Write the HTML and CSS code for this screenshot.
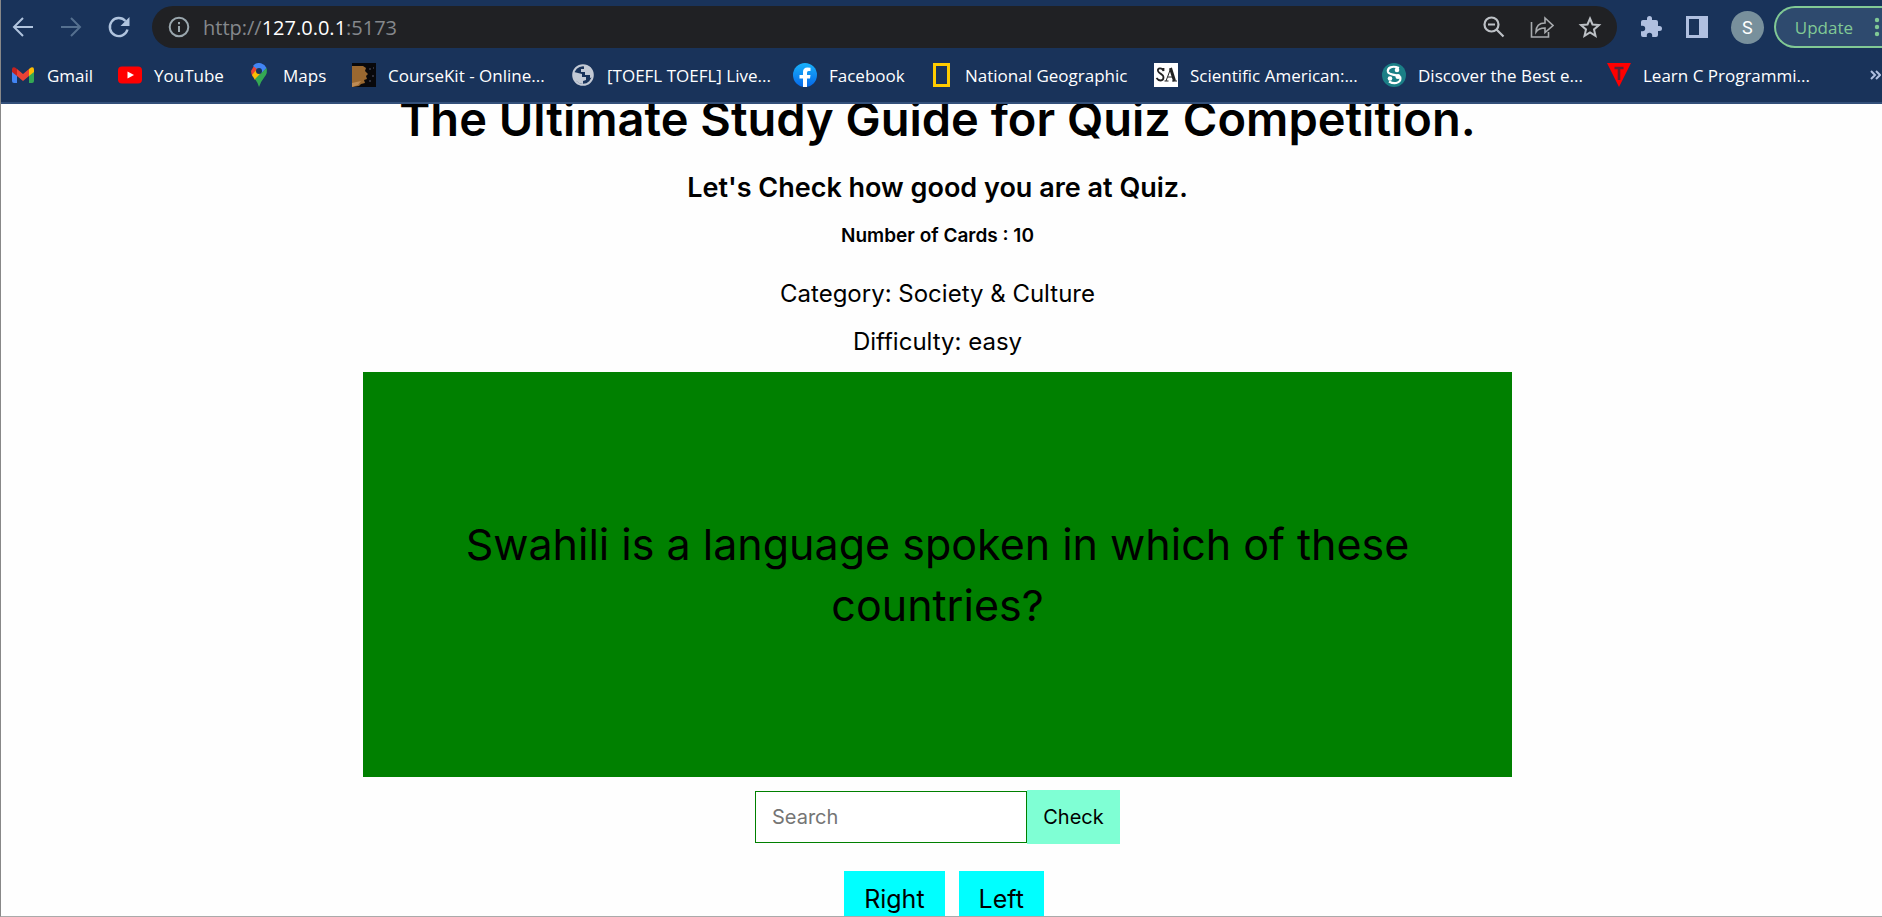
FILE: index.html
```html
<!DOCTYPE html>
<html lang="en">
<head>
<meta charset="utf-8">
<title>Quiz Cards</title>
<link rel="stylesheet" href="styles.css">
</head>
<body>
<header class="browser">
  <div class="toolbar">
    <div class="nav">
      <button class="icon-button" aria-label="Back"><svg width="24" height="24" viewBox="0 0 24 24" fill="none" stroke="#b0c4de" stroke-width="2"><path d="M22 12H3M12 3l-9 9 9 9"/></svg></button>
      <button class="icon-button" aria-label="Forward"><svg width="24" height="24" viewBox="0 0 24 24" fill="none" stroke="#55708f" stroke-width="2"><path d="M2 12h19M12 3l9 9-9 9"/></svg></button>
      <button class="icon-button" aria-label="Reload"><svg width="24" height="24" viewBox="0 0 24 24"><path d="M20.5 14.5A9 9 0 1 1 18.5 6" fill="none" stroke="#b0c4de" stroke-width="2.4"/><path d="M22.500 2v9h-9z" fill="#b0c4de"/></svg></button>
    </div>
    <div class="address">
      <svg width="24" height="24" viewBox="0 0 24 24" fill="none" stroke="#9aa7ae" stroke-width="2"><circle cx="12" cy="12" r="9.300"/><path d="M12 11v6M12 7v2.200"/></svg>
      <span class="url">http://<b>127.0.0.1</b>:5173</span>
      <div class="address-actions">
        <button class="icon-button" aria-label="Zoom"><svg width="24" height="24" viewBox="0 0 24 24" fill="none" stroke="#bdc1c6" stroke-width="2.200"><circle cx="9.500" cy="9.500" r="7"/><path d="M6 9.500h7M14.500 14.500l7 7" /></svg></button>
        <button class="icon-button" aria-label="Share"><svg width="24" height="24" viewBox="0 0 24 24" fill="none" stroke="#a8abae" stroke-width="1.600"><path d="M1.500 7v15h17v-5M6 17c0-7 4-9 9-9V3l8 7.500-8 7V13c-4 0-7 1-9 4z"/></svg></button>
        <button class="icon-button" aria-label="Bookmark"><svg width="24" height="24" viewBox="0 0 24 24" fill="none" stroke="#bdc1c6" stroke-width="2"><path d="M12 3.500l2.500 6 6.500.600-5 4.300 1.500 6.400-5.500-3.400-5.500 3.400L8 14.400l-5-4.300 6.500-.600z"/></svg></button>
      </div>
    </div>
    <div class="extensions">
      <button class="icon-button" aria-label="Extensions"><svg width="24" height="24" viewBox="0 0 24 24" fill="#b0c0e0"><path d="M20.500 11H19V7a2 2 0 0 0-2-2h-4V3.500a2.500 2.500 0 0 0-5 0V5H4a2 2 0 0 0-2 2v3.800h1.500a2.700 2.700 0 0 1 0 5.400H2V20a2 2 0 0 0 2 2h3.800v-1.500a2.700 2.700 0 0 1 5.400 0V22H17a2 2 0 0 0 2-2v-4h1.500a2.500 2.500 0 0 0 0-5z"/></svg></button>
      <button class="icon-button" aria-label="Side panel"><svg width="24" height="24" viewBox="0 0 24 24" fill="#b0c0e0" fill-rule="evenodd"><path d="M1 1h22v22H1zM4 4v16h10V4z"/></svg></button>
      <button class="avatar" aria-label="Profile S">S</button>
    </div>
    <button class="update">Update<svg width="6" height="20" viewBox="0 0 6 20" fill="#81c995"><circle cx="3" cy="3" r="2.200"/><circle cx="3" cy="10" r="2.200"/><circle cx="3" cy="17" r="2.200"/></svg></button>
  </div>
  <nav class="bookmarks">
    <a href="#"><svg width="24" height="24" viewBox="0 0 24 24"><path d="M1 6v12q0 2 2 2h3V10z" fill="#4285f4"/><path d="M23 6v12q0 2-2 2h-3V10z" fill="#34a853"/><path d="M18 6l2-1.500q3-1 3 2V9l-5 4z" fill="#fbbc04"/><path d="M6 6l6 5 6-5v7l-6 5-6-5z" fill="#ea4335"/><path d="M1 9V6.500q0-3 3-2L6 6v7z" fill="#c5221f"/></svg>Gmail</a>
    <a href="#"><svg width="24" height="24" viewBox="0 0 24 24"><rect y="3.500" width="24" height="17" rx="4" fill="#f00"/><path d="M9.500 8.500v7l6.500-3.500z" fill="#fff"/></svg>YouTube</a>
    <a href="#"><svg width="24" height="24" viewBox="0 0 24 24"><path d="M4 8l3.500-6L12 7l-6 7Q4 11 4 8z" fill="#ea4335"/><path d="M6 3Q9-1 14 .300 18 1.500 19.500 5L14 11l-4-5z" fill="#4285f4"/><path d="M5 12l6-7 3 5-6 7z" fill="#fbbc04"/><path d="M19.500 5q1.500 5-2 9-4 5-5.500 10-1-4-4-8z" fill="#34a853"/><circle cx="12" cy="8" r="3" fill="#19335a"/></svg>Maps</a>
    <a href="#"><svg width="24" height="24" viewBox="0 0 24 24"><path d="M0 0h24v24H0z" fill="#08080b"/><path d="M0 3h11l3 2-1 3 3 3-2 2 1 3-3 1 1 3-4 1-2 2-7 1z" fill="#9a6830"/><path d="M0 20l9-2-3 4-6 2z" fill="#bd8b55"/><path d="M17 5h2v2h-2zM20 12h2v2h-2zM17 17h2v2h-2zM21 4h1v2h-1z" fill="#30303c"/></svg>CourseKit - Online...</a>
    <a href="#"><svg width="24" height="24" viewBox="0 0 24 24"><circle cx="12" cy="12" r="9.800" fill="#19335a" stroke="#c3cad5" stroke-width="2"/><path d="M3 9l4 1 4 1v3h4v3l-3 1v3l-4-1-4-3-2-5zM13 2v4h-3v3h4v3h5v3l3-1V9l-3-5z" fill="#c3cad5"/></svg>[TOEFL TOEFL] Live...</a>
    <a href="#"><svg width="24" height="24" viewBox="0 0 24 24"><defs><linearGradient id="fb" x2="0" y2="1"><stop stop-color="#19b2fb"/><stop offset="1" stop-color="#0668e8"/></linearGradient></defs><circle cx="12" cy="12" r="12" fill="url(#fb)"/><path d="M10 24v-8.500H6.500V12H10V9q0-4.500 4.500-4.500l3 .300V8h-2Q14 8 14 9.700V12h3.500l-.500 3.500h-3V24z" fill="#fff"/></svg>Facebook</a>
    <a href="#"><svg width="24" height="24" viewBox="0 0 24 24"><path d="M5.500 1.500h14v21h-14z" fill="none" stroke="#fc0" stroke-width="3"/></svg>National Geographic</a>
    <a href="#"><svg width="24" height="24" viewBox="0 0 24 24"><path d="M0 0h24v24H0z" fill="#fff"/><path d="M9.500 5v3C8 4 3 5 4 8c1 3 5.500 3 5.500 6 0 5-5 4-7 1" fill="none" stroke="#222" stroke-width="1.800"/><path d="M16.500 5l4 13" stroke="#222" stroke-width="3"/><path d="M16.500 6L12 18M14 14h6M10.500 18h4M18 18h5" stroke="#222"/></svg>Scientific American:...</a>
    <a href="#"><svg width="24" height="24" viewBox="0 0 24 24"><circle cx="12" cy="12" r="12" fill="#1b7f86"/><path d="M17 5C10 2 5 5 6 9c1 3 5 2 9 3.500" fill="none" stroke="#fff" stroke-width="2.200"/><path d="M7 18.500c7 4 13 0 11-5" fill="none" stroke="#fff" stroke-width="2.200"/><circle cx="15" cy="7" r="2.300" fill="#fff"/><circle cx="8" cy="15.500" r="2.300" fill="#fff"/><circle cx="16" cy="13.500" r="2.500" fill="#fff"/></svg>Discover the Best e...</a>
    <a href="#"><svg width="24" height="24" viewBox="0 0 24 24"><path d="M0 0h24L12 24z" fill="#f00"/><path d="M7.500 5h9M12 5v12" stroke="#5b2335" stroke-width="2.600"/></svg>Learn C Programmi...</a>
    <button class="more" aria-label="More bookmarks"><svg width="11" height="12" viewBox="0 0 11 12" fill="none" stroke="#b0c0e0" stroke-width="2"><path d="M1 2l4 4-4 4M6 2l4 4-4 4"/></svg></button>
  </nav>
</header>
<main class="page">
  <div class="quiz">
    <h1>The Ultimate Study Guide for Quiz Competition.</h1>
    <h2>Let's Check how good you are at Quiz.</h2>
    <h3>Number of Cards : 10</h3>
    <p class="meta">Category: Society &amp; Culture</p>
    <p class="meta">Difficulty: easy</p>
    <section class="card"><p>Swahili is a language spoken in which of these countries?</p></section>
    <form class="answer">
      <input type="text" placeholder="Search" aria-label="Search">
      <button type="button">Check</button>
    </form>
    <div class="steps">
      <button class="step">Right</button>
      <button class="step">Left</button>
    </div>
  </div>
</main>
</body>
</html>
```
FILE: styles.css
```css
* { box-sizing: border-box; }
body {
  margin: 0;
  height: 100vh;
  display: flex;
  flex-direction: column;
  overflow: hidden;
  border-left: 1px solid #888;
  border-bottom: 1px solid #aaa;
  background: #fefefe;
  color: #000;
  font-family: Inter, "Liberation Sans", sans-serif;
}
button { border: 0; padding: 0; font: inherit; color: inherit; background: none; }
svg { display: block; flex: none; }
h1, h2, h3, p { margin: 0; }

.browser {
  flex: none;
  background: #19335a;
  border-bottom: 2px solid #33507a;
  font-family: "Open Sans", "Noto Sans", sans-serif;
}
.toolbar { display: flex; align-items: center; padding-top: 6px; }
.nav { display: flex; gap: 24px; padding: 0 21px 0 10px; }
.address {
  flex: 1;
  height: 42px;
  display: flex;
  align-items: center;
  gap: 12px;
  padding: 0 15px;
  border-radius: 21px;
  background: #202124;
}
.url { font-size: 20px; color: #85888c; }
.url b { font-weight: 400; color: #fff; }
.address-actions { display: flex; gap: 24px; margin-left: auto; }
.extensions { display: flex; align-items: center; gap: 22px; padding: 0 10px 0 22px; }
.avatar {
  width: 33px;
  height: 33px;
  border-radius: 50%;
  background: #78909c;
  color: #fff;
  font-family: Roboto, sans-serif;
  font-size: 18px;
}
.update {
  display: flex;
  align-items: center;
  gap: 21px;
  height: 42px;
  padding: 0 2px 0 19px;
  border: 2px solid #81c995;
  border-right: 0;
  border-radius: 21px 0 0 21px;
  background: #2e4a6e;
  color: #81c995;
  font-size: 17px;
}
.bookmarks {
  display: grid;
  grid-template-columns: 107px 129px 105px 219px 222px 136px 225px 228px 225px 1fr auto;
  align-items: center;
  height: 54px;
  padding: 0 1px 0 10px;
}
.bookmarks a {
  display: flex;
  align-items: center;
  gap: 12px;
  color: #fff;
  font-size: 17px;
  text-decoration: none;
  white-space: nowrap;
}

.page { flex: 1; min-height: 0; overflow: hidden; padding-right: 8px; }
.quiz { max-width: 1149px; margin: -15px auto 0; text-align: center; }
h1 { font-size: 47px; line-height: 60px; font-weight: 600; white-space: nowrap; }
h2 { margin-top: 19px; font-size: 27px; line-height: 40px; font-weight: 600; }
h3 { margin: 13px 0 25px; font-size: 19px; line-height: 30px; font-weight: 600; }
.meta { margin-bottom: 12px; font-size: 24px; line-height: 36px; }
.card {
  display: flex;
  align-items: center;
  justify-content: center;
  min-height: 405px;
  margin-bottom: 13px;
  padding: 0 100px;
  background: #008000;
  font-size: 43px;
  line-height: 61px;
}
.answer { display: flex; align-items: center; justify-content: center; font-size: 20px; }
.answer input {
  width: 272px;
  height: 52px;
  padding: 0 16px;
  border: 1px solid #008000;
  border-radius: 0;
  background: #fff;
  font: inherit;
}
.answer input::placeholder { color: #757575; }
.answer button { min-width: 93px; height: 54px; background: #7fffd4; }
.steps { display: flex; justify-content: center; gap: 14px; margin-top: 27px; padding-left: 13px; }
.step { padding: 10px 20px; background: #00ffff; font-size: 25px; line-height: 36px; }
```
